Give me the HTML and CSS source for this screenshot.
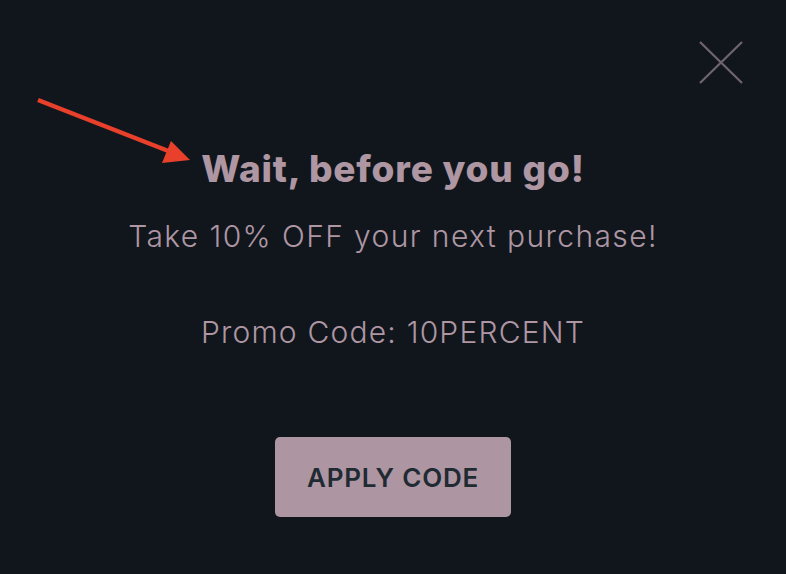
FILE: index.html
```html
<!DOCTYPE html>
<html lang="en">
<head>
    <meta charset="UTF-8">
    <meta name="viewport" content="width=device-width, initial-scale=1.0">
    <title>Wait, before you go!</title>
    <link rel="stylesheet" href="styles.css">
</head>
<body>
    <div class="popup">
        <button class="close-button" aria-label="Close">
            <svg width="44" height="43" viewBox="0 0 44 43">
                <path d="M1 1 L43 42 M43 1 L1 42" stroke="#6f656c" stroke-width="2.2" fill="none"/>
            </svg>
        </button>

        <svg class="arrow" width="200" height="170" viewBox="0 0 200 170">
            <line x1="38" y1="100" x2="176" y2="154" stroke="#e8402a" stroke-width="4.5"/>
            <polygon points="190,160 171,141 162,163" fill="#e8402a"/>
        </svg>

        <h2>Wait, before you go!</h2>
        <p class="offer">Take 10% OFF your next purchase!</p>
        <p class="promo">Promo Code: 10PERCENT</p>
        <button class="apply-button">APPLY CODE</button>
    </div>
</body>
</html>
```

FILE: styles.css
```css
body {
    margin: 0;
    padding: 0;
    background-color: #11161d;
    font-family: Inter, "Open Sans", sans-serif;
}
.popup {
    position: relative;
    height: 574px;
    display: flex;
    flex-direction: column;
    align-items: center;
    padding-top: 147px;
    box-sizing: border-box;
    color: #ae96a3;
    text-align: center;
}
.close-button {
    position: absolute;
    top: 41px;
    right: 43px;
    padding: 0;
    background: none;
    border: none;
    cursor: pointer;
    line-height: 0;
}
.arrow {
    position: absolute;
    top: 0;
    left: 0;
}
h2 {
    margin: 0;
    font-size: 37px;
    font-weight: 800;
    line-height: 44px;
    letter-spacing: 0.8px;
}
.offer {
    margin: 27px 0 0;
    font-size: 30px;
    font-weight: 300;
    line-height: 36px;
    letter-spacing: 1.4px;
}
.promo {
    margin: 60px 0 0;
    font-size: 30px;
    font-weight: 300;
    line-height: 36px;
    letter-spacing: 1.2px;
}
.apply-button {
    margin-top: 87px;
    width: 236px;
    height: 80px;
    background-color: #ae95a2;
    color: #1f2a33;
    border: none;
    border-radius: 5px;
    font-family: inherit;
    font-size: 26px;
    font-weight: 600;
    letter-spacing: 0.8px;
    cursor: pointer;
}
```
